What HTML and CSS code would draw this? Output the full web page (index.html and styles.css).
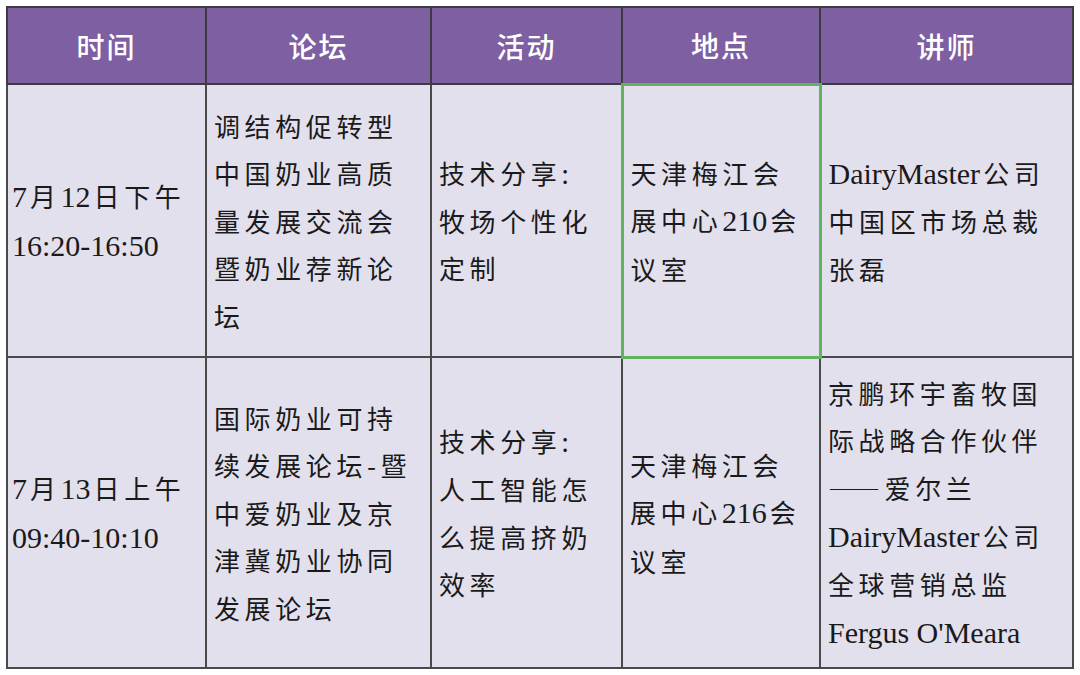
FILE: index.html
```html
<!DOCTYPE html>
<html lang="zh-CN">
<head>
<meta charset="utf-8">
<title>日程表</title>
<link rel="stylesheet" href="styles.css">
</head>
<body>
<table class="schedule">
  <colgroup>
    <col class="c1"><col class="c2"><col class="c3"><col class="c4"><col class="c5">
  </colgroup>
  <thead>
    <tr class="head-row">
      <th>时间</th>
      <th>论坛</th>
      <th>活动</th>
      <th>地点</th>
      <th>讲师</th>
    </tr>
  </thead>
  <tbody>
    <tr class="row-a">
      <td class="time"><span class="en">7</span>月<span class="en">12</span>日下午<br><span class="en">16:20-16:50</span></td>
      <td>调结构促转型<br>中国奶业高质<br>量发展交流会<br>暨奶业荐新论<br>坛</td>
      <td>技术分享:<br>牧场个性化<br>定制</td>
      <td class="selected">天津梅江会<br>展中心<span class="en">210</span>会<br>议室</td>
      <td><span class="en">DairyMaster</span>公司<br>中国区市场总裁<br>张磊</td>
    </tr>
    <tr class="row-b">
      <td class="time"><span class="en">7</span>月<span class="en">13</span>日上午<br><span class="en">09:40-10:10</span></td>
      <td>国际奶业可持<br>续发展论坛-暨<br>中爱奶业及京<br>津冀奶业协同<br>发展论坛</td>
      <td>技术分享:<br>人工智能怎<br>么提高挤奶<br>效率</td>
      <td>天津梅江会<br>展中心<span class="en">216</span>会<br>议室</td>
      <td>京鹏环宇畜牧国<br>际战略合作伙伴<br>——爱尔兰<br><span class="en">DairyMaster</span>公司<br>全球营销总监<br><span class="en">Fergus O'Meara</span></td>
    </tr>
  </tbody>
</table>
</body>
</html>
```

FILE: styles.css
```css
html, body {
  margin: 0;
  padding: 0;
  background: #ffffff;
}

body {
  padding: 6px 0 0 6px;
}

.schedule {
  border-collapse: collapse;
  table-layout: fixed;
  width: 1066px;
  border: 2px solid #555555;
}

.c1 { width: 199px; }
.c2 { width: 225px; }
.c3 { width: 191px; }
.c4 { width: 198px; }
.c5 { width: 253px; }

.head-row {
  height: 77px;
  background: #7e5fa2;
}

.head-row th {
  color: #ffffff;
  font-family: "Noto Sans CJK SC", sans-serif;
  font-weight: 500;
  font-size: 28px;
  letter-spacing: 2px;
  text-align: center;
  vertical-align: middle;
  border: 2px solid #3e3a44;
  padding: 0;
}

.row-a { height: 273px; }
.row-b { height: 311px; }

tbody td {
  background: #e3e0ed;
  color: #1a1a1a;
  font-family: "Noto Sans CJK SC", sans-serif;
  font-weight: 400;
  font-size: 26px;
  line-height: 47.6px;
  letter-spacing: 4.6px;
  vertical-align: middle;
  text-align: left;
  padding: 0 4px 0 7px;
  border: 2px solid #4a4a4a;
  white-space: nowrap;
}

tbody td.time {
  padding-left: 4px;
}

tbody td.selected {
  border: 3px solid #60b45d;
}

.en {
  font-family: "Liberation Serif", serif;
  font-size: 30px;
  letter-spacing: 0;
  margin-right: 3px;
}
```
